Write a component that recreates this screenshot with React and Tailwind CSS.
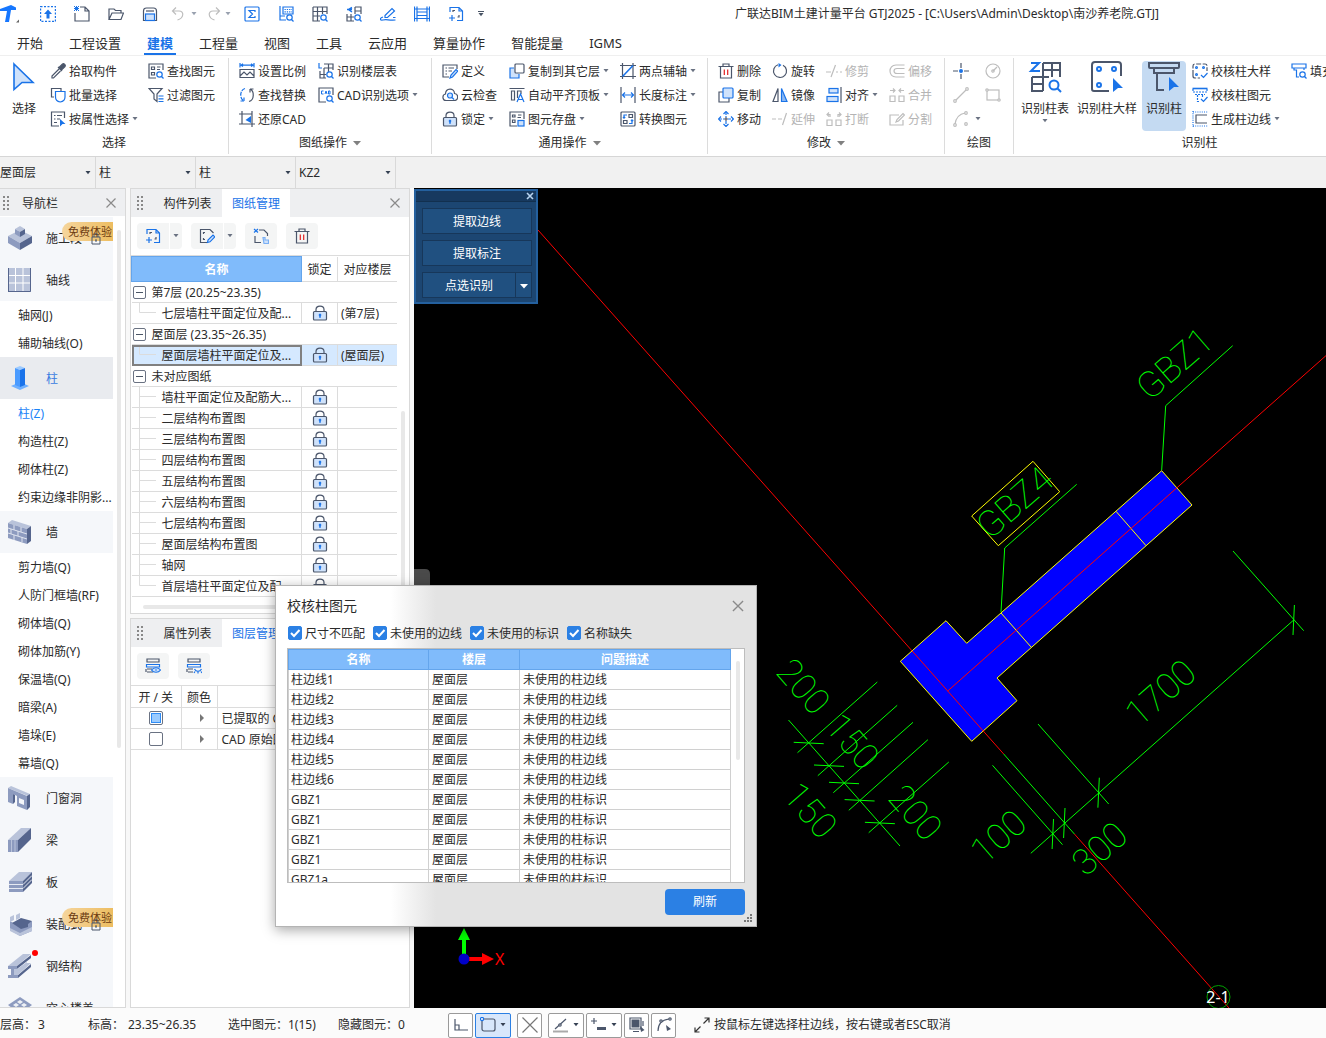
import { useState } from 'react';

const D = '#4b566b';
const B = '#1a73e8';
const L = '#cfe2fb';
const G = '#bdbdbd';

const magnifier = (
  <>
    <circle cx="11.5" cy="11.5" r="2.7" stroke={B} fill="#fff" />
    <path d="M13.5 13.5L15.5 15.5" stroke={B} />
  </>
);

// 16 x 16 line icons
const icons = {
  capture: (
    <>
      <rect x="0.5" y="0.5" width="15" height="15" stroke={B} strokeDasharray="2 1.5" strokeWidth="1.4" />
      <path d="M8 3.5L12 8H9.5V12.5H6.5V8H4Z" fill={B} />
    </>
  ),
  newFile: (
    <>
      <path d="M6 1H11L15 5V15H1V7M11 1V5H15" stroke={D} />
      <path d="M0 0L5 5M5 0L0 5M2.5 0V5M0 2.5H5" stroke={B} strokeWidth="1" />
    </>
  ),
  open: <path d="M1 13V3H6L7.5 4.5H13V7M1 13.5L4 7H15.5L13 13.5Z" stroke={D} />,
  save: (
    <>
      <path d="M1.5 14.5V5Q1.5 2 4.5 2H11.5Q14.500 2 14.5 5V14.5Z" stroke={D} />
      <rect x="3.5" y="8" width="9" height="6.5" stroke={B} fill={L} />
      <path d="M4 5H12" stroke={D} />
    </>
  ),
  undo: <path d="M5 1.5L1.5 5L5 8.5M1.5 5H8C13.5 5 13 12 6.5 14" stroke={G} />,
  redo: <path d="M11 1.5L14.5 5L11 8.5M14.5 5H8C2.5 5 3 12 9.5 14" stroke={G} />,
  sum: (
    <>
      <rect x="1" y="1" width="14" height="14" rx="1" stroke={B} />
      <path d="M11 6V4.5H5L8.5 8L5 11.5H11V10" stroke={B} />
    </>
  ),
  tableFind: (
    <>
      <path d="M2 0V14H8M2 10H7M5 1H15V8H5Z" stroke={B} />
      <path d="M6.5 3.5H14M6.5 5.8H14" stroke={B} strokeDasharray="1.3 1" />
      {magnifier}
    </>
  ),
  gridFind: (
    <>
      <path d="M1 1H15V8M1 1V15H8M1 5.5H15M1 10H8M5.5 1V15M10.5 1V8" stroke={D} />
      {magnifier}
    </>
  ),
  cloudGrid: (
    <>
      <path d="M9 1H15V8M9 1V8M9 5H15M1 8V15H8M1 11H8M5 8V15" stroke={D} />
      <path d="M6 1.5L2.5 3.5L6 6M1 3.5H6" stroke={B} strokeWidth="1.5" />
      {magnifier}
    </>
  ),
  sign: <path d="M5 9.5L12 2.5L14.5 5L7.5 11.5H5ZM3 11C-1 12.500 0 14.500 3 14C7 13 8 14.500 15.500 14M13 11.500H15.500" stroke={B} />,
  beams: <path d="M3 0.5V15.5M13 0.5V15.5M1 3H15M1 12.5H15M3 6H13M3 9.5H13M0.5 0.5V15.5M15.5 0.5V15.5" stroke={B} />,
  addFile: (
    <>
      <path d="M2 6V1.5H11L14.5 5V14.5H9M11 1.5V5H14.5" stroke={B} />
      <path d="M1 12H7M4 9V15" stroke={B} />
      <path d="M5 6V4.5H7M11 9V11H9.5" stroke={D} />
    </>
  ),
  dropper: (
    <>
      <path d="M8 4L12 8M9 6L2 13V15H3.5L10.5 8" stroke={D} />
      <path d="M9 4.5L12.5 1C14 0 16 2 15 3.5L11.5 7Z" fill={D} stroke={D} />
    </>
  ),
  batch: (
    <>
      <path d="M4 10H1.5V1.5H11V4" stroke={D} />
      <path d="M5.5 4.5H15V10C15 13 13 14.5 10.2 15C7.5 14.5 5.5 13 5.5 10Z" stroke={B} fill="#fff" />
    </>
  ),
  attrSelect: (
    <>
      <path d="M14.5 7V1H1.5V15H9M4 4.5H5.5M7 4.5H12M4 8H5.5M7 8H10M4 11.5H7" stroke={D} />
      <path d="M10 8L15.5 13H12.5L10 15.5Z" fill={B} />
    </>
  ),
  findElem: (
    <>
      <path d="M15 7V1H1V15H8M3.5 4H6.5V6.5H3.5ZM3.5 9.5H6.5V12H3.5ZM9 4H12.5M9 6.5H12" stroke={D} />
      {magnifier}
    </>
  ),
  filter: (
    <>
      <path d="M1 1.5H14L9 7V14.5L6 12V7Z" stroke={D} />
      <path d="M10.5 9H15.5M10.5 11.8H15.5M10.5 14.5H15.5" stroke={B} />
    </>
  ),
  scale: (
    <>
      <path d="M1 6.5H15V14.5H1ZM1 13L5 9L8 12L11 9L15 13" stroke={D} />
      <path d="M1 0V4.5M15 0V4.5M1 2.2H15M4 0.8L2 2.2L4 3.6M12 0.8L14 2.2L12 3.6" stroke={B} />
    </>
  ),
  replace: (
    <>
      <path d="M6 1.5C0.5 3 0.5 12 5 14M5 14V10.5M5 14H1.5" stroke={B} strokeDasharray="4 1" />
      <path d="M10 14.5C15.5 13 15.5 4 11 2M11 2V5.5M11 2H14.5" stroke={D} />
    </>
  ),
  restore: (
    <>
      <path d="M3 0V13H16M0 3H13V16M0 13H3M13 0V3" stroke={D} />
      <path d="M12 5L6.500 9L12 12ZM9 8H13" fill={B} />
    </>
  ),
  floorTable: (
    <>
      <path d="M6 1H15V7M10.5 1V9M6 5H15M2 8V15H8M2 11.5H8M6 5V15" stroke={D} />
      <path d="M1 0V5H4" stroke={B} />
      {magnifier}
    </>
  ),
  cadOpts: (
    <>
      <path d="M15 8V1H1V15H8" stroke={D} />
      <path d="M5.5 4H3.5V7H5.5M7 7L8 4L9 7M10.5 4V7H12V4Z" stroke={B} strokeWidth="1" />
      {magnifier}
    </>
  ),
  define: (
    <>
      <path d="M15 6V2H1V14H7M3.5 5H5M6.5 5H12M3.5 8H5M6.5 8H10M3.5 11H5" stroke={D} />
      <path d="M8 15L9 12L14 6.5L15.8 8.2L10.5 14Z" stroke={B} fill={L} />
    </>
  ),
  cloudCheck: (
    <>
      <path d="M4 13.5C0 13.5 0 7.5 3.5 7C3.5 0.5 12.5 0.5 12.5 6.5C17 7 16.5 13.5 12 13.5Z" stroke={D} />
      <circle cx="8" cy="8.5" r="2.5" stroke={B} fill={L} />
      <path d="M10 10.5L12 12.5" stroke={B} />
    </>
  ),
  lock: (
    <>
      <path d="M4 6.5V4.5C4 0 12 0 12 4.5V6.5" stroke={D} />
      <rect x="1.5" y="6.5" width="13" height="8.5" rx="1" stroke={D} fill={L} />
      <path d="M8 8.8V12.8M6.8 10H9.2" stroke={B} strokeWidth="1.6" />
    </>
  ),
  copyFloor: (
    <>
      <path d="M5 5H1V15H10V11" stroke={B} fill={L} />
      <rect x="6" y="1" width="9" height="9" rx="1" stroke={D} fill="#fff" />
    </>
  ),
  alignTop: (
    <>
      <path d="M0.5 1.5H15.5M2.5 4H5.5V13H2.5Z" stroke={D} />
      <path d="M8.5 11V4H12V7" stroke={D} />
      <path d="M8 15L11.5 7L15 15M9.5 12.5H13.5" stroke={B} />
    </>
  ),
  saveElem: (
    <>
      <path d="M15 8V1H1V15H8M3.5 4H6V6H3.5ZM9 4H12.5M3.5 9H6V11.5H3.5ZM8.5 6.5H12" stroke={D} />
      <rect x="9" y="9.5" width="6" height="5.5" stroke={B} fill={L} />
    </>
  ),
  twoPoint: (
    <>
      <path d="M2.5 0V16M13 0V16M0 2.5H16M0 13.5H16" stroke={D} />
      <path d="M2.5 13.5L13 2.5" stroke={B} strokeWidth="1.6" />
    </>
  ),
  dimension: (
    <>
      <path d="M1 0V16M15 0V16" stroke={D} />
      <path d="M2 8H14M5 5.5L2.5 8L5 10.5M11 5.5L13.5 8L11 10.5" stroke={B} />
    </>
  ),
  convert: (
    <>
      <rect x="1" y="1" width="14" height="14" rx="1" stroke={D} />
      <path d="M9 3.5H12.5V6.5H9ZM3.5 9.5H7V12.5H3.5Z" stroke={D} />
      <path d="M7 4H4V7M3 6L4 7.2L5.2 6M9 12.5H12V9M11 10L12 8.8L13.2 10" stroke={B} />
    </>
  ),
  trash: (
    <>
      <path d="M0.5 3.5H15.5M5 3.5V1H11V3.5M2.5 3.5V15H13.5V3.5" stroke={D} />
      <path d="M6.3 6.5V12M9.7 6.5V12" stroke="#e02020" />
    </>
  ),
  copy: (
    <>
      <path d="M5 5H1V15H11V11" stroke={D} />
      <rect x="5" y="1" width="10" height="10" rx="1" stroke={B} fill={L} />
    </>
  ),
  move: (
    <>
      <path d="M8 1V6M8 10V15M1 8H6M10 8H15" stroke={B} strokeDasharray="3 1" />
      <path d="M5.5 3L8 0.5L10.5 3M5.5 13L8 15.5L10.5 13M3 5.5L0.5 8L3 10.5M13 5.5L15.5 8L13 10.5" stroke={B} />
      <path d="M8 6V10M6 8H10" stroke={D} />
    </>
  ),
  rotate: (
    <>
      <path d="M6 1.8A6.5 6.5 0 1 0 11 2.2" stroke={D} />
      <path d="M6.5 0L9.5 2L6.5 4.5Z" fill={B} />
    </>
  ),
  mirror: (
    <>
      <path d="M6 1.5V14.5H1Z" stroke={D} />
      <path d="M9.5 1.5V14.5H15Z" stroke={B} fill="#8cb8f2" />
    </>
  ),
  trim: <path d="M0 9H5M10 9H12M14 9H16M5 14L9.5 2" stroke={G} />,
  align: (
    <>
      <rect x="3" y="1.5" width="9" height="4.5" stroke={B} fill={L} />
      <rect x="1" y="9.5" width="11" height="5" stroke={B} fill={L} />
      <path d="M15 0V16" stroke={D} />
    </>
  ),
  extend: <path d="M0 8H4M6 8H10M10.5 14L14.5 2" stroke={G} />,
  split: <path d="M1 9H6V14.5H1ZM10 9H15V14.5H10ZM4 6V3.5H1M3 1.5L1 3.5L3 5.5M12 6V3.5H15M13 1.5L15 3.5L13 5.5" stroke={G} />,
  offset: <path d="M15.5 2H7C-1 2 -1 14 7 14H15.5M15.5 5.5H8C4 5.5 4 10.5 8 10.5H15.5" stroke={G} />,
  merge: <path d="M1 9H6V14.5H1ZM10 9H15V14.5H10ZM1 3.5H5.5M4 1.5L6 3.5L4 5.5M15 3.5H10.5M12 1.5L10 3.5L12 5.5" stroke={G} />,
  divide: <path d="M10 4H1V14H14V9M7 11L8 8.5L14 2.5L15.5 4L9.5 10Z" stroke={G} />,
  point: (
    <>
      <path d="M8 0V5M8 11V16M0 8H5M11 8H16" stroke={D} />
      <circle cx="8" cy="8" r="2" fill={B} />
    </>
  ),
  circle: (
    <>
      <circle cx="8" cy="8" r="7" stroke={G} />
      <path d="M8 8L12 4" stroke={G} />
      <circle cx="8" cy="8" r="1.2" stroke={G} />
    </>
  ),
  line: (
    <>
      <path d="M3 13L13 3" stroke={G} />
      <circle cx="2" cy="14" r="1.3" stroke={G} />
      <circle cx="14" cy="2" r="1.3" stroke={G} />
    </>
  ),
  rect: (
    <>
      <rect x="2" y="3" width="12" height="10" stroke={G} />
      <circle cx="2" cy="3" r="1.2" fill="#fff" stroke={G} />
      <circle cx="14" cy="13" r="1.2" fill="#fff" stroke={G} />
    </>
  ),
  arc: (
    <>
      <path d="M2 13C3 7 6 3 12 2" stroke={G} />
      <circle cx="2" cy="14" r="1.3" stroke={G} />
      <circle cx="13" cy="2" r="1.3" stroke={G} />
      <circle cx="13" cy="13" r="1.3" stroke={G} />
    </>
  ),
  checkDetail: (
    <>
      <path d="M1 12V3Q1 1 3 1H13Q15 1 15 3V8M1 12V13Q1 15 3 15H8" stroke={D} strokeDasharray="5 1.500" />
      <circle cx="4.5" cy="4.5" r="0.9" stroke={B} />
      <circle cx="11.5" cy="4.5" r="0.9" stroke={B} />
      <circle cx="4.5" cy="11.5" r="0.9" stroke={B} />
      <path d="M9 12L11.5 14.5L15.5 10" stroke={B} />
    </>
  ),
  checkElem: (
    <>
      <path d="M0.500 1.500H15.500" stroke={B} strokeWidth="1.600" />
      <path d="M1 2V5H15V2M3 7.500H13M5.500 8V14.500H8M10.500 8V10" stroke={B} strokeDasharray="2 1" />
      <path d="M9 12L11.5 14.5L15.5 10" stroke={B} />
    </>
  ),
  edges: (
    <>
      <path d="M1 0V16M1 1H16M1 15H16" stroke={B} strokeDasharray="1 1.2" />
      <path d="M15 4H4V12H15" stroke={D} />
    </>
  ),
  fill: (
    <>
      <path d="M1 1H15V5H1ZM3 5V7H5.5V14H8M13 5V7" stroke={B} />
      {magnifier}
    </>
  ),
  editFile: (
    <>
      <path d="M8 14.5H1.5V1.5H11L14.5 5M4.5 6V4.5H6M4.5 10V11.5H6" stroke={D} />
      <path d="M8.5 14.5L9 12L14 7L15.8 8.8L11 13.8Z" stroke={B} fill={L} />
    </>
  ),
  matchFile: (
    <>
      <path d="M2 8V14.5H8M6 2H11L14.5 5.5V8" stroke={D} />
      <path d="M1 1L5 4.5M5 1L1 4.5" stroke={B} />
      <path d="M10 9.5H12V12H15.5V15.5H11Z" stroke="#7ab0f5" fill={L} />
    </>
  ),
  layerShow: (
    <>
      <path d="M2 1H14V4H2ZM2 14H8M2 11H7M1 11V14" stroke={D} />
      <path d="M1.500 6.500H14.500V9H1.500Z" stroke={B} />
      <path d="M6.5 12C8.5 9 13.5 9 15.5 12C13.5 15 8.5 15 6.5 12Z" stroke={B} fill={L} />
      <circle cx="11" cy="12" r="0.8" fill={B} />
    </>
  ),
  layerHide: (
    <>
      <path d="M2 1H14V4H2ZM2 14H7M2 11H7M1 11V14" stroke={D} />
      <path d="M1.500 6.500H14.500V9H1.500Z" stroke={B} />
      <path d="M8.5 11C10 14 14 14 15.5 11M9 13.5L8 15M12 13.5V15.5M15 13.5L16 15" stroke={B} />
    </>
  ),
  ortho: <path d="M2 2V13H15M2 8H6V13" stroke={D} />,
  snap: (
    <>
      <rect x="2" y="2" width="13" height="12" rx="2" stroke={D} />
      <circle cx="2" cy="2" r="1.6" stroke={B} fill="#fff" />
    </>
  ),
  cross: <path d="M0.5 0.5L15.5 15.5M15.5 0.5L0.5 15.5" stroke="#777" />,
  angle: (
    <>
      <path d="M2 12L13 2" stroke={D} />
      <path d="M0 14.5H15" stroke="#aaa" strokeWidth="2" />
      <circle cx="7" cy="8" r="1.2" fill="#fff" stroke={D} />
    </>
  ),
  plusMinus: (
    <>
      <path d="M0 4H6M3 1V7" stroke={D} />
      <rect x="6" y="10" width="9" height="3" fill={D} />
    </>
  ),
  stack: (
    <>
      <rect x="2.5" y="2.5" width="8" height="8" fill={D} />
      <path d="M1 1H12V12H1ZM14 4V9M4 14.5H10" stroke={D} />
      <path d="M11 9L15.5 13L12 15Z" fill={D} />
    </>
  ),
  curve: (
    <>
      <path d="M2 14C2 7 5 3 13 2" stroke={D} />
      <circle cx="5" cy="4" r="1.2" fill="#fff" stroke={D} />
      <circle cx="14" cy="2" r="1.2" fill="#fff" stroke={D} />
      <path d="M10 8L15 12L11 14Z" fill={D} />
    </>
  ),
  expand: <path d="M9.5 6.5L15 1M10.5 1H15V5.5M6.5 9.5L1 15M1 10.5V15H5.5" stroke="#333" />,
  close: <path d="M3.5 3.5L12.5 12.5M12.5 3.5L3.5 12.5" stroke="#8a8a8a" />,
};

function Icon({ name, className = 'size-4' }) {
  return (
    <svg viewBox="0 0 16 16" fill="none" strokeWidth="1.2" className={`${className} shrink-0`} aria-hidden="true">
      {icons[name]}
    </svg>
  );
}

function Caret({ className = 'text-gray-500' }) {
  return (
    <svg viewBox="0 0 6 4" className={`h-1 w-1.5 shrink-0 ${className}`} aria-hidden="true">
      <path d="M0.5 0H5.5L3 3.2Z" fill="currentColor" />
    </svg>
  );
}

function Grip() {
  return (
    <svg viewBox="0 0 6 14" className="h-3.5 w-1.5 shrink-0" fill="#888" aria-hidden="true">
      {[0, 4, 8, 12].map((y) => (
        <path key={y} d={`M0 ${y}h2v2h-2zM4 ${y}h2v2h-2z`} />
      ))}
    </svg>
  );
}

const quickTools = ['capture', 'newFile', 'open', 'save', 'undo', 'redo', 'sum', 'tableFind', 'gridFind', 'cloudGrid', 'sign', 'beams', 'addFile'];

const tabs = ['开始', '工程设置', '建模', '工程量', '视图', '工具', '云应用', '算量协作', '智能提量', 'IGMS'];

function TitleBar() {
  return (
    <header className="flex h-[27px] items-center bg-white">
      <div className="w-[31px] shrink-0">
        <svg viewBox="0 0 20 20" className="size-5" aria-hidden="true">
          <path d="M0 5L11 1L16 3.500V6H11L9 18H5L7 7H0Z" fill="#1677ff" />
          <path d="M16 18.500H19V15.500Z" fill="#666" />
        </svg>
      </div>
      {quickTools.map((name) => (
        <button key={name} aria-label={name} className="flex w-[34px] shrink-0 items-center justify-center gap-1">
          <Icon name={name} />
          {(name === 'undo' || name === 'redo') && <Caret className="text-gray-400" />}
        </button>
      ))}
      <button aria-label="more" className="flex w-4 flex-col items-center gap-px">
        <span className="h-px w-1.5 bg-gray-600" />
        <Caret className="text-gray-600" />
      </button>
      <h1 className="flex-1 truncate pl-[246px] leading-5">
        广联达BIM土建计量平台 GTJ2025 - [C:\Users\Admin\Desktop\南沙养老院.GTJ]
      </h1>
    </header>
  );
}

function Tabs({ active, onSelect }) {
  return (
    <nav className="flex h-[29px] border-b border-[#efefef] bg-white pl-1">
      {tabs.map((tab) => (
        <button
          key={tab}
          onClick={() => onSelect(tab)}
          className={
            tab === active
              ? 'relative px-[13px] pt-1 text-[13px] leading-5 font-bold text-[#1a73e8] after:absolute after:inset-x-2.5 after:bottom-0 after:h-0.5 after:bg-[#1a73e8]'
              : 'px-[13px] pt-1 text-[13px] leading-5'
          }
        >
          {tab}
        </button>
      ))}
    </nav>
  );
}

function Tool({ icon, label, caret, disabled }) {
  return (
    <button
      disabled={disabled}
      aria-label={label || icon}
      className="flex h-6 items-center gap-[3px] whitespace-nowrap disabled:text-[#b4b4b4]"
    >
      <Icon name={icon} />
      <span className="pt-0.5">{label}</span>
      {caret && <Caret />}
    </button>
  );
}

function Column({ tools, className }) {
  return (
    <div className={`flex shrink-0 flex-col ${className}`}>
      {tools.map(([icon, label, caret, disabled]) => (
        <Tool key={icon} icon={icon} label={label} caret={caret} disabled={disabled} />
      ))}
    </div>
  );
}

function Group({ label, caret, className, children }) {
  return (
    <section className={`my-0.5 flex shrink-0 flex-col border-r border-[#dcdcdc] ${className}`}>
      <div className="flex h-[73px] pt-px">{children}</div>
      <div className="flex h-6 items-center justify-center gap-1.5 pt-px">
        {label}
        {caret && (
          <svg viewBox="0 0 8 5" className="h-[5px] w-2" aria-hidden="true">
            <path d="M0 0H8L4 4.500Z" fill="#808080" />
          </svg>
        )}
      </div>
    </section>
  );
}

function BigTool({ label, caret, active, className, children }) {
  return (
    <button className={`mt-0.5 flex h-[70px] shrink-0 flex-col items-center rounded-sm ${active ? 'bg-[#c4daf2]' : ''} ${className}`}>
      <svg viewBox="0 2 34 34" fill="none" strokeWidth="2" className="size-[34px]" aria-hidden="true">
        {children}
      </svg>
      <span className="mt-1 leading-5 whitespace-nowrap">{label}</span>
      {caret && <Caret />}
    </button>
  );
}

function Ribbon() {
  return (
    <div className="flex h-[101px] overflow-hidden border-b border-[#d6d6d6] bg-white">
      <Group label="选择" className="w-[229px]">
        <BigTool label="选择" className="w-12">
          <path d="M7 5L26 23.500H15L7 30.500Z" fill={L} stroke={B} strokeWidth="1.600" />
        </BigTool>
        <Column className="w-[98px] pl-0.5" tools={[['dropper', '拾取构件'], ['batch', '批量选择'], ['attrSelect', '按属性选择', true]]} />
        <Column className="w-20 pl-0.5" tools={[['findElem', '查找图元'], ['filter', '过滤图元']]} />
      </Group>
      <Group label="图纸操作" caret className="w-[203px]">
        <Column className="ml-2.5 w-[79px]" tools={[['scale', '设置比例'], ['replace', '查找替换'], ['restore', '还原CAD']]} />
        <Column className="w-28" tools={[['floorTable', '识别楼层表'], ['cadOpts', 'CAD识别选项', true]]} />
      </Group>
      <Group label="通用操作" caret className="w-[276px]">
        <Column className="ml-2.5 w-[67px]" tools={[['define', '定义'], ['cloudCheck', '云检查'], ['lock', '锁定', true]]} />
        <Column className="w-[111px]" tools={[['copyFloor', '复制到其它层', true], ['alignTop', '自动平齐顶板', true], ['saveElem', '图元存盘', true]]} />
        <Column className="w-20" tools={[['twoPoint', '两点辅轴', true], ['dimension', '长度标注', true], ['convert', '转换图元']]} />
      </Group>
      <Group label="修改" caret className="w-[237px]">
        <Column className="ml-2.5 w-[54px]" tools={[['trash', '删除'], ['copy', '复制'], ['move', '移动']]} />
        <Column className="w-[54px]" tools={[['rotate', '旋转'], ['mirror', '镜像'], ['extend', '延伸', false, true]]} />
        <Column className="w-[63px]" tools={[['trim', '修剪', false, true], ['align', '对齐', true], ['split', '打断', false, true]]} />
        <Column className="w-12" tools={[['offset', '偏移', false, true], ['merge', '合并', false, true], ['divide', '分割', false, true]]} />
      </Group>
      <Group label="绘图" className="w-[69px]">
        <Column className="ml-2 w-8" tools={[['point'], ['line'], ['arc', '', true]]} />
        <Column className="w-6" tools={[['circle', '', false, true], ['rect', '', false, true]]} />
      </Group>
      <Group label="识别柱" className="w-[372px]">
        <BigTool label="识别柱表" caret className="w-[62px]">
          <path d="M15 4H32V18M24 4V18M15 11H32M15 4V32M4 18V32H15M4 18H21M4 25H15" stroke={D} />
          <path d="M3 4H11L3 12H12" stroke={B} />
          <circle cx="26" cy="26" r="4.500" stroke={B} fill="#fff" />
          <path d="M29 29L33 33" stroke={B} />
        </BigTool>
        <BigTool label="识别柱大样" className="w-[62px]">
          <path d="M2 6V30Q2 32 4 32H19M2 6Q2 3 5 3H28Q31 3 31 6V17" stroke={D} />
          <circle cx="9" cy="10" r="2" stroke={B} />
          <circle cx="24" cy="10" r="2" stroke={B} />
          <circle cx="9" cy="26" r="2" stroke={B} />
          <path d="M23 19L33 29H28L23 33Z" fill={B} />
        </BigTool>
        <BigTool label="识别柱" active className="ml-1 w-11">
          <path d="M2 4H32V8Q32 9 31 9H3Q2 9 2 8ZM7 9V14H27V9M10 14V31H17" stroke={D} />
          <path d="M22 18L32 28H27L22 32Z" fill={B} />
        </BigTool>
        <Column className="w-[99px] pl-1.5" tools={[['checkDetail', '校核柱大样'], ['checkElem', '校核柱图元'], ['edges', '生成柱边线', true]]} />
        <Column className="w-20 pl-1.5" tools={[['fill', '填充识别柱']]} />
      </Group>
    </div>
  );
}

function SelectorBar() {
  const selectors = [
    ['楼层', '屋面层', 'w-24'],
    ['构件分类', '柱', 'w-[100px] pl-[3px]'],
    ['构件类型', '柱', 'w-[100px] pl-[3px]'],
    ['构件名称', 'KZ2', 'w-[100px] pl-[3px]'],
  ];
  return (
    <div className="flex h-[31px] bg-[#f1f1f1]">
      {selectors.map(([name, value, cls]) => (
        <label key={name} className={`flex items-center border-r border-[#d9d9d9] pr-1 ${cls}`}>
          <select aria-label={name} className="min-w-0 flex-1 appearance-none bg-transparent leading-5">
            <option>{value}</option>
          </select>
          <Caret className="text-gray-700" />
        </label>
      ))}
    </div>
  );
}

const A1 = '#b9c3da';
const A2 = '#8d9bbf';
const A3 = '#55658d';

// 24 x 24 category pictures
const navIcons = {
  stage: (
    <>
      <path d="M0 10L12 4L24 10L12 17Z" fill={A1} />
      <path d="M0 10L12 17V24L0 17Z" fill={A2} />
      <path d="M24 10L12 17V24L24 17Z" fill={A3} />
      <path d="M7 3L12 0L17 3L12 6Z" fill={A1} />
      <path d="M7 3L12 6V11L7 8Z" fill={A2} />
      <path d="M17 3L12 6V11L17 8Z" fill={A3} />
    </>
  ),
  axis: (
    <>
      <path d="M0 0H23V24H0Z" fill={A1} />
      <path d="M7.500 0V23M15 0V23M0 7.500H22M0 15H22" stroke="#fff" />
      <path d="M0 23.500H22.500V0M0.500 0V23.500" stroke={A3} fill="none" />
    </>
  ),
  column: (
    <>
      <path d="M3 20L12 16L21 20L12 24Z" fill="#6fb0ff" />
      <path d="M7 2L12 0L17 2L12 4Z" fill="#9ccaff" />
      <path d="M7 2L12 4V21L7 19Z" fill="#4a9bff" />
      <path d="M17 2L12 4V21L17 19Z" fill="#1a73ea" />
    </>
  ),
  wall: (
    <>
      <path d="M0 3L4 0L23 6L19 9Z" fill={A1} />
      <path d="M0 3L19 9V24L0 18Z" fill={A2} />
      <path d="M19 9L23 6V21L19 24Z" fill={A3} />
      <path d="M0 8L19 14M0 13L19 19M6 5V10M13 7V12M3 9V14M10 11V16M6 15V20M14 17V22" stroke="#dfe4ef" />
    </>
  ),
  opening: (
    <>
      <path d="M0 2L3 0L22 8L20 10Z" fill={A1} />
      <path d="M0 2L19 10V24L9 20V10L5 8V18L0 16Z" fill={A2} />
      <path d="M11 12L16 14V19L11 17Z" fill="#f5f7fa" />
      <path d="M19 10L22 8V21L19 24ZM5 8L7 9V16L5 18Z" fill={A3} />
    </>
  ),
  beam: (
    <>
      <path d="M0 12L13 0H23L10 12Z" fill={A1} />
      <path d="M0 12H10V24H0Z" fill={A2} />
      <path d="M10 12L23 0V11L10 24Z" fill={A3} />
      <path d="M3.500 12V24M7 12V24" stroke={A1} />
    </>
  ),
  slab: (
    <>
      <path d="M1 11L11 2H24L15 11Z" fill={A1} />
      <path d="M1 11H15V22H1Z" fill={A2} />
      <path d="M15 11L24 2V13L15 22Z" fill={A3} />
      <path d="M1 14.500H15L24 5.500M1 18.500H15L24 9.500" stroke="#e6eaf2" fill="none" />
    </>
  ),
  prefab: (
    <>
      <path d="M2 9L12 15L24 9V19L12 24L2 18Z" fill={A2} />
      <path d="M4 11L13 6L24 9L20 12V15L13 17Z" fill={A3} />
      <path d="M2 16L12 21L24 15V19L12 24L2 19Z" fill={A1} />
      <path d="M2 5L6 3V8L2 10ZM8 3L12 1V6L8 8Z" fill={A1} />
    </>
  ),
  steel: (
    <>
      <path d="M0 12L15 0H23L9 12Z" fill={A1} />
      <path d="M0 12H9V15H6V21H10V24H0V21H3V15H0Z" fill={A2} />
      <path d="M9 12L23 1V4L9 15ZM10 21L23 10V13L10 24Z" fill={A3} />
      <path d="M6 21V15L9 15L19 8V9H23L10 21Z" fill={A1} />
    </>
  ),
  hollow: (
    <>
      <path d="M0 9L12 1L24 9L12 18Z" fill={A2} />
      <path d="M5 9L8 7L11 9L8 11ZM9 6L12 4L15 6L12 8ZM13 9L16 7L19 9L16 11Z" fill="#eef1f6" />
    </>
  ),
};

const navTree = [
  { icon: 'stage', label: '施工段', trial: true },
  { icon: 'axis', label: '轴线', items: ['轴网(J)', '辅助轴线(O)'] },
  { icon: 'column', label: '柱', active: true, items: ['柱(Z)', '构造柱(Z)', '砌体柱(Z)', '约束边缘非阴影...'] },
  {
    icon: 'wall',
    label: '墙',
    items: ['剪力墙(Q)', '人防门框墙(RF)', '砌体墙(Q)', '砌体加筋(Y)', '保温墙(Q)', '暗梁(A)', '墙垛(E)', '幕墙(Q)'],
  },
  { icon: 'opening', label: '门窗洞' },
  { icon: 'beam', label: '梁' },
  { icon: 'slab', label: '板' },
  { icon: 'prefab', label: '装配式', trial: true },
  { icon: 'steel', label: '钢结构', dot: true },
  { icon: 'hollow', label: '空心楼盖' },
];

function Category({ entry }) {
  return (
    <div className="shrink-0">
      <button
        className={`relative flex h-[42px] w-full items-center gap-3.5 pl-2 ${entry.active ? 'bg-[#e9ebef] text-[#3a7be0]' : 'bg-[#f5f7fa]'}`}
      >
        <svg viewBox="0 0 24 24" className="size-6" aria-hidden="true">
          {navIcons[entry.icon]}
        </svg>
        <span className="pt-0.5">{entry.label}</span>
        {entry.dot && <span className="absolute top-[5px] left-8 size-1.5 rounded-full bg-[#ff0000]" />}
        {entry.trial && (
          <span className="absolute top-[5px] right-0 h-[19px] rounded-l-full bg-linear-to-r from-[#f5d59c] to-[#edbd60] pr-px pl-1.5 text-[11px] leading-5 whitespace-nowrap text-[#6b3a10]">
            免费体验
            <svg viewBox="0 0 10 12" fill="none" stroke={D} className="absolute top-[11px] right-3 h-3 w-2.5" aria-hidden="true">
              <path d="M3 4V2.500C3 0 7 0 7 2.500V4M1 4H9V11H1ZM5 7V9M4 7H6" />
            </svg>
          </span>
        )}
      </button>
      {(entry.items || []).map((item) => (
        <button
          key={item}
          className={`block h-7 w-full pt-0.5 pl-[18px] text-left whitespace-nowrap ${item === '柱(Z)' ? 'text-[#1a83f7]' : ''}`}
        >
          {item}
        </button>
      ))}
    </div>
  );
}

function Navigator() {
  return (
    <aside className="flex w-[126px] shrink-0 flex-col border border-l-0 border-[#d9d9d9] bg-white">
      <div className="flex h-[27px] shrink-0 items-center gap-[13px] bg-[#eeeff1] pr-1.5 pl-[3px]">
        <Grip />
        <h2 className="flex-1 pt-0.5">导航栏</h2>
        <button aria-label="关闭导航栏">
          <Icon name="close" />
        </button>
      </div>
      <div className="flex min-h-0 flex-1 gap-1">
        <div className="flex w-[113px] flex-col overflow-hidden pt-px">
          {navTree.map((entry) => (
            <Category key={entry.label} entry={entry} />
          ))}
        </div>
        <div className="mt-3.5 h-[518px] w-1 rounded-full bg-[#e8e8e8]" />
      </div>
    </aside>
  );
}

function PanelTabs({ names, closable }) {
  return (
    <div className="flex h-7 shrink-0 items-center bg-[#eeeff1] px-1.5">
      <Grip />
      <button className="ml-2.5 h-full w-[69px] pt-0.5">{names[0]}</button>
      <button className="h-full w-[68px] bg-white pt-0.5 text-[#1a73e8]">{names[1]}</button>
      {closable && (
        <button aria-label="关闭面板" className="ml-auto">
          <Icon name="close" />
        </button>
      )}
    </div>
  );
}

function SquareTool({ icon, caret }) {
  return (
    <div className="flex h-[26px] gap-px overflow-hidden rounded-sm">
      <button aria-label={icon} className="flex w-8 items-center justify-center bg-[#f4f5f5]">
        <Icon name={icon} />
      </button>
      {caret && (
        <button aria-label={`${icon} options`} className="flex w-3 items-center justify-center bg-[#f4f5f5]">
          <Caret />
        </button>
      )}
    </div>
  );
}

const drawings = [
  { group: '第7层 (20.25~23.35)' },
  { name: '七层墙柱平面定位及配...', floor: '(第7层)', last: true },
  { group: '屋面层 (23.35~26.35)' },
  { name: '屋面层墙柱平面定位及...', floor: '(屋面层)', last: true, selected: true },
  { group: '未对应图纸' },
  { name: '墙柱平面定位及配筋大...' },
  { name: '二层结构布置图' },
  { name: '三层结构布置图' },
  { name: '四层结构布置图' },
  { name: '五层结构布置图' },
  { name: '六层结构布置图' },
  { name: '七层结构布置图' },
  { name: '屋面层结构布置图' },
  { name: '轴网' },
  { name: '首层墙柱平面定位及配...', last: true },
];

function DrawingRow({ row }) {
  if (row.group) {
    return (
      <tr className="h-[21px] border-b border-[#dcdcdc]">
        <td colSpan={3} className="p-0">
          <div className="flex items-center gap-1.5 pl-px">
            <button aria-label="折叠" className="flex size-[13px] items-center justify-center rounded-xs border border-gray-500">
              <span className="h-px w-[7px] bg-gray-600" />
            </button>
            <span className="pt-0.5">{row.group}</span>
          </div>
        </td>
      </tr>
    );
  }
  return (
    <tr className={`h-[21px] border-b border-[#dcdcdc] ${row.selected ? 'bg-[#d5e9ff]' : ''}`}>
      <td className={`border-r border-[#dcdcdc] p-0 ${row.selected ? 'outline-2 -outline-offset-2 outline-[#808080]' : ''}`}>
        <div className="flex h-5 items-center gap-1.5 overflow-hidden pl-[7px] whitespace-nowrap">
          <svg viewBox="0 0 17 20" className="h-5 w-[17px] shrink-0" fill="none" stroke="#dcdcdc" aria-hidden="true">
            <path d={row.last ? 'M0.5 0V9.5H17' : 'M0.5 0V20M0.5 9.5H17'} />
          </svg>
          <span className="pt-0.5">{row.name}</span>
        </div>
      </td>
      <td className="border-r border-[#dcdcdc] p-0">
        <Icon name="lock" className="mx-auto block size-4" />
      </td>
      <td className="p-0 pt-0.5 pl-[3px]">{row.floor}</td>
    </tr>
  );
}

function DrawingPanel() {
  return (
    <section className="flex h-[426px] shrink-0 flex-col border border-[#d9d9d9] bg-white">
      <PanelTabs names={['构件列表', '图纸管理']} closable />
      <div className="flex gap-[9px] px-1.5 py-[6px]">
        <SquareTool icon="addFile" caret />
        <SquareTool icon="editFile" caret />
        <SquareTool icon="matchFile" />
        <SquareTool icon="trash" />
      </div>
      <div className="flex gap-1 border-t border-[#dcdcdc]">
        <table className="w-[266px] table-fixed border-collapse leading-[18px]">
          <thead>
            <tr className="h-[25px] border-b border-[#dcdcdc]">
              <th className="w-[170px] border border-[#64a5ec] bg-[#80bbfb] p-0 pt-0.5 font-bold text-white">名称</th>
              <th className="w-9 border-r border-[#dcdcdc] p-0 pt-0.5 font-normal">锁定</th>
              <th className="p-0 pt-0.5 font-normal">对应楼层</th>
            </tr>
          </thead>
          <tbody>
            {drawings.map((row) => (
              <DrawingRow key={row.group || row.name} row={row} />
            ))}
          </tbody>
        </table>
        <div className="mt-[155px] h-[184px] w-1 rounded-full bg-[#e8e8e8]" />
      </div>
      <div className="mt-2 ml-3 h-1 w-60 rounded-full bg-[#e8e8e8]" />
    </section>
  );
}

function LayerPanel() {
  const layers = [
    { name: '已提取的 CAD 图层', on: true },
    { name: 'CAD 原始图层', on: false },
  ];
  return (
    <section className="flex min-h-0 flex-1 flex-col border border-[#d9d9d9] bg-white">
      <PanelTabs names={['属性列表', '图层管理']} />
      <div className="flex gap-[9px] px-1.5 py-[6px]">
        <SquareTool icon="layerShow" />
        <SquareTool icon="layerHide" />
      </div>
      <table className="w-full table-fixed border-collapse border-t border-[#dcdcdc] leading-[18px]">
        <thead>
          <tr className="h-[22px] border-b border-[#dcdcdc]">
            <th className="w-[50px] border-r border-[#dcdcdc] p-0 pt-0.5 font-normal">开 / 关</th>
            <th className="w-9 border-r border-[#dcdcdc] p-0 pt-0.5 font-normal">颜色</th>
            <th className="p-0 pt-0.5 font-normal">名称</th>
          </tr>
        </thead>
        <tbody>
          {layers.map((layer) => (
            <tr key={layer.name} className="h-[21px] border-b border-[#dcdcdc]">
              <td className="border-r border-[#dcdcdc] p-0">
                <input
                  type="checkbox"
                  aria-label={layer.name}
                  defaultChecked={layer.on}
                  className="mx-auto flex size-3.5 appearance-none rounded-xs border border-gray-500 bg-white p-px before:size-full checked:before:border checked:before:border-[#2f8cf5] checked:before:bg-[#9acbff]"
                />
              </td>
              <td className="border-r border-[#dcdcdc] p-0 pl-1.5">
                <svg viewBox="0 0 4 8" className="mx-auto h-2 w-1" aria-hidden="true">
                  <path d="M0 0L4 4L0 8Z" fill="#777" />
                </svg>
              </td>
              <td className="p-0 pt-0.5 pl-1">{layer.name}</td>
            </tr>
          ))}
        </tbody>
      </table>
    </section>
  );
}

// crossing ticks on the dimension lines
const leftTicks = [[808.7, 743], [829, 765.7], [844, 783], [859.6, 800.3], [879.9, 823]];
const rightTicks = [[1293.7, 620], [1098.6, 792.7], [1064.3, 823], [1052.8, 834]];

const labels = [
  ['GBZ1', 1175, 364, -41],
  ['GBZ4', 1015, 503, -41],
  ['1700', 1161, 693, -41],
  ['100', 999, 837, -41],
  ['300', 1100, 849, -41],
  ['200', 803, 687, 49],
  ['150', 852, 742, 49],
  ['150', 810, 811, 49],
  ['200', 915, 813, 49],
];

function ModelView() {
  return (
    <svg viewBox="414 188 912 820" preserveAspectRatio="xMinYMin slice" className="absolute inset-0 h-full w-full" fill="none">
      <path
        d="M900.3 661.3L946 620.7L966.7 643.3L1161.7 470.7L1192 505L997 678L1017 700.7L971.7 741.3Z"
        fill="#0000ff"
        stroke="#ffff00"
      />
      <path d="M1001 613L1031.300 647.300M1116 511.300L1146 545.700" stroke="#ffff00" />
      <path d="M1033 461.300L1059.700 491.700L998.300 545.700L971.700 516Z" stroke="#ffff00" />
      <path d="M538 230L1003.700 754M1074.400 834L1229 1008M947.700 691L1326 355.600" stroke="#ff0000" />
      <g stroke="#00ff00">
        <path d="M1003.700 754L1074.400 834" />
        <path d="M1001 612L1004.700 548L1076.700 484.300M1161.700 470L1165.700 405.700L1232.700 345.700" />
        <path d="M1233 551L1303.700 630.700M1293.700 620L1030.800 853.300M1038 724L1108.700 804M992.500 765.300L1062.500 844.700" />
        <path d="M788.500 720L900 846M877.300 682L797.500 752.700M897.200 705.300L817.800 775.700M913 722.300L833.300 792.700M927.900 739.700L848.800 810.300M948.800 762L868.700 832.700" />
        {leftTicks.map(([x, y]) => (
          <path key={x} d={`M${x - 15} ${y - 0.7}L${x + 15} ${y + 0.7}`} />
        ))}
        {rightTicks.map(([x, y]) => (
          <path key={x} d={`M${x + 0.7} ${y - 15}L${x - 0.7} ${y + 15}`} />
        ))}
      </g>
      {labels.map(([text, x, y, angle]) => (
        <text
          key={`${text}-${x}`}
          transform={`translate(${x} ${y}) rotate(${angle})`}
          textAnchor="middle"
          dominantBaseline="central"
          fill="#00ff00"
          className="font-['Roboto'] text-[36px] font-thin"
        >
          {text}
        </text>
      ))}
      <circle cx="1218.500" cy="997" r="11.500" stroke="#00a000" />
      <text x="1218" y="1003" textAnchor="middle" fill="#fff" className="font-['Noto_Sans'] text-[16px]">
        2-1
      </text>
      <path d="M462 955V940H458L464 928L470 940H466V955Z" fill="#00ff00" />
      <path d="M469 957H482V953L494 959L482 965V961H469Z" fill="#ff0000" />
      <circle cx="464" cy="959" r="5.500" fill="#0000c8" />
      <text x="495" y="965" fill="#ff0000" className="font-['Noto_Sans'] text-[16px]">
        X
      </text>
      <path d="M414 569H425Q430 569 430 574V600H414Z" fill="#4a4a4a" />
    </svg>
  );
}

function ExtractPalette() {
  const button = 'h-[26px] border border-[#17375a] bg-[#205080] pt-0.5 leading-5';
  return (
    <div className="absolute top-px left-0 w-[124px] border-2 border-[#24609e] bg-[#1c4672] pb-1 text-white">
      <div className="flex h-[11px] items-center justify-end border-b border-[#12304f] bg-[#17395f] pr-0.5">
        <button aria-label="关闭工具" className="size-2">
          <svg viewBox="0 0 8 8" stroke="#b8d4f0" strokeWidth="1.600" className="block size-2" aria-hidden="true">
            <path d="M1 1L7 7M7 1L1 7" />
          </svg>
        </button>
      </div>
      <div className="flex flex-col gap-1.5 pt-1.5 pr-1 pl-1.5">
        <button className={button}>提取边线</button>
        <button className={button}>提取标注</button>
        <div className="flex">
          <button className={`flex-1 ${button}`}>点选识别</button>
          <button aria-label="识别方式" className={`flex w-4 items-center justify-center border-l-0 ${button}`}>
            <svg viewBox="0 0 8 5" className="h-[5px] w-2" aria-hidden="true">
              <path d="M0 0H8L4 4.500Z" fill="#fff" />
            </svg>
          </button>
        </div>
      </div>
    </div>
  );
}

const issues = [
  ['柱边线1', '未使用的柱边线'],
  ['柱边线2', '未使用的柱边线'],
  ['柱边线3', '未使用的柱边线'],
  ['柱边线4', '未使用的柱边线'],
  ['柱边线5', '未使用的柱边线'],
  ['柱边线6', '未使用的柱边线'],
  ['GBZ1', '未使用的柱标识'],
  ['GBZ1', '未使用的柱标识'],
  ['GBZ1', '未使用的柱标识'],
  ['GBZ1', '未使用的柱标识'],
  ['GBZ1a', '未使用的柱标识'],
];

const issueFilters = ['尺寸不匹配', '未使用的边线', '未使用的标识', '名称缺失'];

function CheckDialog({ onClose }) {
  return (
    <div
      role="dialog"
      aria-label="校核柱图元"
      className="absolute top-[397px] left-[275px] flex w-[482px] flex-col border border-[#b4b4b4] bg-[linear-gradient(to_right,#ffffff_115px,#e3e3e3_160px)] px-[11px] pb-[11px] shadow-[0_3px_12px_rgba(0,0,0,0.35)]"
    >
      <div className="flex h-[39px] items-center justify-between">
        <h2 className="text-[14px] leading-5">校核柱图元</h2>
        <button aria-label="关闭" onClick={onClose} className="-mr-0.5">
          <Icon name="close" className="size-[18px]" />
        </button>
      </div>
      <div className="flex h-[23px] gap-2 pl-px">
        {issueFilters.map((name) => (
          <label key={name} className="flex h-4 items-center gap-[3px]">
            <span className="relative size-3.5">
              <input type="checkbox" defaultChecked className="peer block size-3.5 appearance-none rounded-xs border border-gray-400 bg-white checked:border-[#2b80e4] checked:bg-[#2b80e4]" />
              <svg viewBox="0 0 14 14" fill="none" stroke="#fff" strokeWidth="2" className="pointer-events-none absolute inset-0 hidden size-3.5 peer-checked:block" aria-hidden="true">
                <path d="M3 7L6 10L11.500 4" />
              </svg>
            </span>
            <span className="pt-0.5">{name}</span>
          </label>
        ))}
      </div>
      <div className="flex h-[235px] gap-[5px] overflow-hidden border border-[#bdbdbd] bg-white">
        <table className="w-[443px] table-fixed border-collapse leading-[19px]">
          <thead>
            <tr className="h-5 bg-[#80bbfb] text-white">
              <th className="w-[140px] border border-[#64a5ec] p-0 font-bold">名称</th>
              <th className="w-[91px] border border-[#64a5ec] p-0 font-bold">楼层</th>
              <th className="border border-[#64a5ec] p-0 font-bold">问题描述</th>
            </tr>
          </thead>
          <tbody>
            {issues.map(([name, problem], i) => (
              <tr key={i} className="h-5">
                <td className="border border-[#d0d0d0] p-0 pl-0.5">{name}</td>
                <td className="border border-[#d0d0d0] p-0 pl-[3px]">屋面层</td>
                <td className="border border-[#d0d0d0] p-0 pl-[3px]">{problem}</td>
              </tr>
            ))}
          </tbody>
        </table>
        <div className="mt-3 h-[99px] w-1 rounded-full bg-[#e8e8e8]" />
      </div>
      <button className="mt-1.5 h-[26px] w-20 self-end rounded-sm bg-[#2b80e4] text-white">刷新</button>
      <svg viewBox="0 0 9 9" className="absolute right-[3px] bottom-[3px] size-[9px]" fill="#777" aria-hidden="true">
        <path d="M6 0h2v2h-2zM3 3h2v2h-2zM6 3h2v2h-2zM0 6h2v2h-2zM3 6h2v2h-2zM6 6h2v2h-2z" />
      </svg>
    </div>
  );
}

function StatusBar() {
  const modes = [
    ['ortho', false, 'w-[25px]'],
    ['snap', true, 'w-9'],
    ['cross', false, 'ml-1 w-[25px]'],
    ['angle', true, 'ml-1 w-9'],
    ['plusMinus', true, 'w-9'],
    ['stack', false, 'w-[25px]'],
    ['curve', false, 'w-[25px]'],
  ];
  return (
    <footer className="flex h-[30px] shrink-0 items-center bg-[#fbfbfb] pt-1 whitespace-nowrap">
      <span className="w-[38px]">层高：</span>
      <span className="w-[50px]">3</span>
      <span className="w-10">标高：</span>
      <span className="w-[100px]">23.35~26.35</span>
      <span className="w-[110px]">选中图元：1(15)</span>
      <span className="w-[110px]">隐藏图元：0</span>
      <div className="flex gap-0.5">
        {modes.map(([icon, caret, cls]) => (
          <button
            key={icon}
            aria-label={icon}
            className={`flex h-[25px] items-center justify-center gap-1 rounded-xs border ${icon === 'snap' ? 'border-[#2b80e4] bg-[#d8e7fb]' : 'border-[#9a9a9a] bg-white'} ${cls}`}
          >
            <Icon name={icon} />
            {caret && <Caret className="text-gray-700" />}
          </button>
        ))}
      </div>
      <p className="flex items-center gap-1 pl-[18px]">
        <Icon name="expand" />
        按鼠标左键选择柱边线，按右键或者ESC取消
      </p>
    </footer>
  );
}

export default function App() {
  const [tab, setTab] = useState('建模');
  const [dialogOpen, setDialogOpen] = useState(true);

  return (
    <div className="flex h-screen flex-col overflow-hidden bg-white font-['Noto_Sans','Noto_Sans_CJK_SC',sans-serif] text-[12px] leading-5 text-[#2b2b2b]">
      <TitleBar />
      <Tabs active={tab} onSelect={setTab} />
      <Ribbon />
      <SelectorBar />
      <main className="relative flex min-h-0 flex-1 gap-1 bg-[#f8f8f8]">
        <Navigator />
        <div className="flex w-[280px] shrink-0 flex-col gap-1">
          <DrawingPanel />
          <LayerPanel />
        </div>
        <div className="relative min-w-0 flex-1 overflow-hidden bg-black">
          <ModelView />
          <ExtractPalette />
        </div>
        {dialogOpen && <CheckDialog onClose={() => setDialogOpen(false)} />}
      </main>
      <StatusBar />
    </div>
  );
}
